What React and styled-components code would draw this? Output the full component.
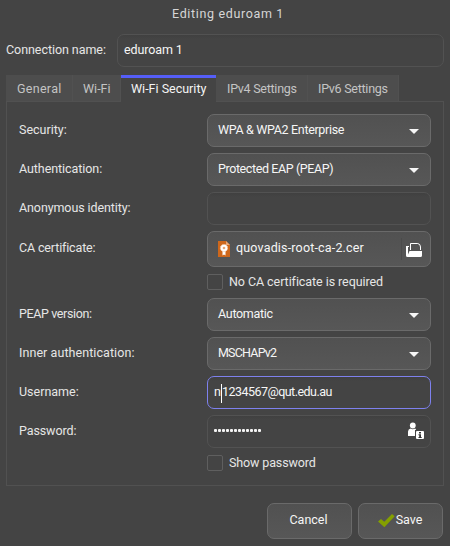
import React from "react";
import styled, { createGlobalStyle, css } from "styled-components";

const GlobalStyle = createGlobalStyle`
  *, *::before, *::after { box-sizing: border-box; }
  body {
    margin: 0;
    background: #444444;
    color: #e6e6e6;
    font-family: Roboto, "Noto Sans", sans-serif;
    font-size: 12.5px;
    line-height: 17px;
  }
  svg { display: block; flex: none; }
`;

const Dialog = styled.main`
  width: 450px;
  height: 546px;
  padding: 0 6px;
  display: flex;
  flex-direction: column;
  background: #444444;
  overflow: hidden;
`;

const Text = styled.span`
  white-space: pre;
  letter-spacing: ${(p) => p.$ls || 0}px;
`;

const TitleBar = styled.header`
  height: 34px;
  padding: 5px 0 0 6px;
  text-align: center;
  color: #d6d6d6;
`;

const NameRow = styled.div`
  display: flex;
  align-items: center;
  height: 33px;
`;

const NameLabel = styled.label`
  width: 111px;
  padding-bottom: 2px;
`;

const Entry = styled.div`
  flex: 1;
  height: 33px;
  padding: 0 6px 2px;
  display: flex;
  align-items: center;
  border: 1px solid ${(p) => (p.$focused ? "#7e81ee" : "#525252")};
  border-radius: 7px;
  background: linear-gradient(#404040, #444444 4px);
  color: #f6f6f6;
`;

const TabBar = styled.nav`
  display: flex;
  height: 26px;
  margin-top: 8px;
`;

const Tab = styled.div`
  width: ${(p) => p.$width}px;
  padding: 1px 0 0 ${(p) => p.$inset || 10}px;
  display: flex;
  align-items: center;
  background: #4d4d4d;
  color: #c4c4c4;
  border-right: 1px solid #515151;
  ${(p) =>
    p.$active &&
    css`
      background: #444444;
      color: #f4f4f4;
      border-right: 0;
      border-top: 3px solid #555ef8;
      padding-top: 0;
      padding-bottom: 3px;
      height: 27px;
      z-index: 1;
    `}
`;

const Panel = styled.section`
  width: 438px;
  height: 385px;
  padding: 12px;
  border: 1px solid #515151;
  display: grid;
  grid-template-columns: 188px 224px;
  grid-template-rows: 33px 33px 33px 36px 19px 33px 33px 33px 33px 19px;
  row-gap: 6px;
`;

const FieldLabel = styled.label`
  align-self: center;
  padding-bottom: 2px;
`;

const FileLabel = styled(FieldLabel)`
  padding-bottom: 4px;
`;

const raised = css`
  display: flex;
  align-items: center;
  border: 1px solid #6a6a6a;
  border-radius: 7px;
  background: linear-gradient(#515151, #575757);
  color: #f6f6f6;
`;

const Combo = styled.div`
  ${raised}
  justify-content: space-between;
  padding: 0 10px 2px;
`;

const Arrow = styled.svg`
  width: 10px;
  height: 5px;
  margin: 3px 1px 0 0;
  fill: #f6f6f6;
`;

const FileButton = styled.div`
  ${raised}
  padding-left: 10px;
`;

const FileName = styled.div`
  flex: 1;
  padding: 0 0 3px 6px;
`;

const FileOpen = styled.div`
  height: 22px;
  width: 29px;
  border-left: 1px solid #4b4b4b;
  padding: 5px 0 0 4px;
`;

const CheckRow = styled.div`
  grid-column: 2;
  display: flex;
  align-items: center;
  gap: 6px;
  padding-bottom: 1px;
`;

const CheckLabel = styled.label`
  padding-bottom: 2px;
`;

const CheckBox = styled.i`
  width: 16px;
  height: 16px;
  border: 1px solid #5f5f5f;
  border-radius: 2px;
`;

const Caret = styled.i`
  width: 1px;
  height: 19px;
  margin: 3px 0 0;
  background: #ffffff;
`;

const Dots = styled.div`
  display: flex;
  gap: 1px;
`;

const Dot = styled.i`
  width: 3px;
  height: 3px;
  border-radius: 1px;
  background: #f4f4f4;
`;

const EntryIcon = styled.svg`
  margin-left: auto;
`;

const Actions = styled.footer`
  display: flex;
  justify-content: flex-end;
  gap: 6px;
  padding: 17px 1px 0 0;
`;

const Action = styled.button`
  ${raised}
  width: 85px;
  height: 36px;
  justify-content: center;
  padding: 0 2px 3px 0;
  font: inherit;
`;

const CheckMark = styled.svg`
  width: 17px;
  height: 14px;
  margin: 3px 1px 0 1px;
`;

const ComboField = ({ label, ls, value, vs }) => (
  <>
    <FieldLabel><Text $ls={ls}>{label}</Text></FieldLabel>
    <Combo>
      <Text $ls={vs}>{value}</Text>
      <Arrow viewBox="0 0 10 5"><path d="M0 0h10L5.5 4.6q-.5.5-1 0z" /></Arrow>
    </Combo>
  </>
);

const CertificateIcon = () => (
  <svg width="12" height="16" viewBox="0 0 12 16">
    <path fill="#ce671b" d="M0 0h8l4 4v12H0z" />
    <path fill="#e7a878" d="M8 0l4 4H8z" />
    <path fill="#fff" d="M4.5 9h3v5.5L6 13.4l-1.5 1.1z" />
    <circle cx="6" cy="7" r="3.6" fill="#fff" stroke="#f3c9aa" strokeWidth="1" strokeDasharray="1.2 .8" />
    <circle cx="6" cy="7" r="1.3" fill="#e7a878" />
  </svg>
);

const OpenIcon = () => (
  <svg width="17" height="15" viewBox="0 0 17 15" fill="#fff">
    <path d="M0 3h3v1H2v7.5L3.5 8H16v4.5q0 1.5-1.5 1.5h-13Q0 14 0 12.5z" />
    <path d="M4.5 7V.5h7.3q2.7.5 2.7 3.5v3" fill="none" stroke="#fff" />
  </svg>
);

const CredentialIcon = () => (
  <EntryIcon width="17" height="17" viewBox="0 0 17 17" fill="#fff">
    <circle cx="5.8" cy="3.5" r="2.9" />
    <path d="M1 14V9.5Q1.300 7 3.500 6.500q2.300 1.500 4.700 0l1 1.500H8v6z" />
    <path d="M10 9h6q1 0 1 1v6q0 1-1 1h-6q-1 0-1-1v-6q0-1 1-1z" />
    <path fill="#333" d="M12 10h2v1.500h-2zM11.500 12.200H14V15h.7v1h-3.200v-1h.7v-1.800h-.7z" />
  </EntryIcon>
);

const CheckIcon = () => (
  <CheckMark viewBox="0 0 17 14">
    <path fill="#84a000" d="M0 7.5L3 5l3.3 2.800L14 0l2.700 2.200L6.400 13.300z" />
  </CheckMark>
);

export default function App() {
  return (
    <>
      <GlobalStyle />
      <Dialog>
        <TitleBar><Text $ls={0.65}>Editing eduroam 1</Text></TitleBar>
        <NameRow>
          <NameLabel><Text $ls={-0.06}>Connection name:</Text></NameLabel>
          <Entry><Text $ls={-0.1}>eduroam 1</Text></Entry>
        </NameRow>
        <TabBar>
          <Tab $width={67} $inset={11}><Text $ls={0.3}>General</Text></Tab>
          <Tab $width={48}><Text>Wi-Fi</Text></Tab>
          <Tab $width={95} $active><Text>Wi-Fi Security</Text></Tab>
          <Tab $width={92} $inset={11}><Text $ls={-0.27}>IPv4 Settings</Text></Tab>
          <Tab $width={91}><Text $ls={-0.27}>IPv6 Settings</Text></Tab>
        </TabBar>
        <Panel>
          <ComboField label="Security:" value="WPA & WPA2 Enterprise" vs={-0.33} />
          <ComboField label="Authentication:" ls={-0.07} value="Protected EAP (PEAP)" vs={-0.4} />
          <FieldLabel><Text $ls={-0.1}>Anonymous identity:</Text></FieldLabel>
          <Entry />
          <FileLabel><Text $ls={-0.15}>CA certificate:</Text></FileLabel>
          <FileButton>
            <CertificateIcon />
            <FileName><Text $ls={0.17}>quovadis-root-ca-2.cer</Text></FileName>
            <FileOpen><OpenIcon /></FileOpen>
          </FileButton>
          <CheckRow><CheckBox /><CheckLabel><Text $ls={-0.07}>No CA certificate is required</Text></CheckLabel></CheckRow>
          <ComboField label="PEAP version:" ls={-0.38} value="Automatic" vs={-0.3} />
          <ComboField label="Inner authentication:" ls={0.07} value="MSCHAPv2" vs={-0.8} />
          <FieldLabel><Text>Username:</Text></FieldLabel>
          <Entry $focused><Text>n</Text><Caret /><Text $ls={-0.52}>1234567@qut.edu.au</Text></Entry>
          <FieldLabel><Text $ls={-0.1}>Password:</Text></FieldLabel>
          <Entry>
            <Dots>{Array.from({ length: 12 }, (_, i) => <Dot key={i} />)}</Dots>
            <CredentialIcon />
          </Entry>
          <CheckRow><CheckBox /><CheckLabel><Text $ls={-0.13}>Show password</Text></CheckLabel></CheckRow>
        </Panel>
        <Actions>
          <Action><Text>Cancel</Text></Action>
          <Action><CheckIcon /><Text>Save</Text></Action>
        </Actions>
      </Dialog>
    </>
  );
}
